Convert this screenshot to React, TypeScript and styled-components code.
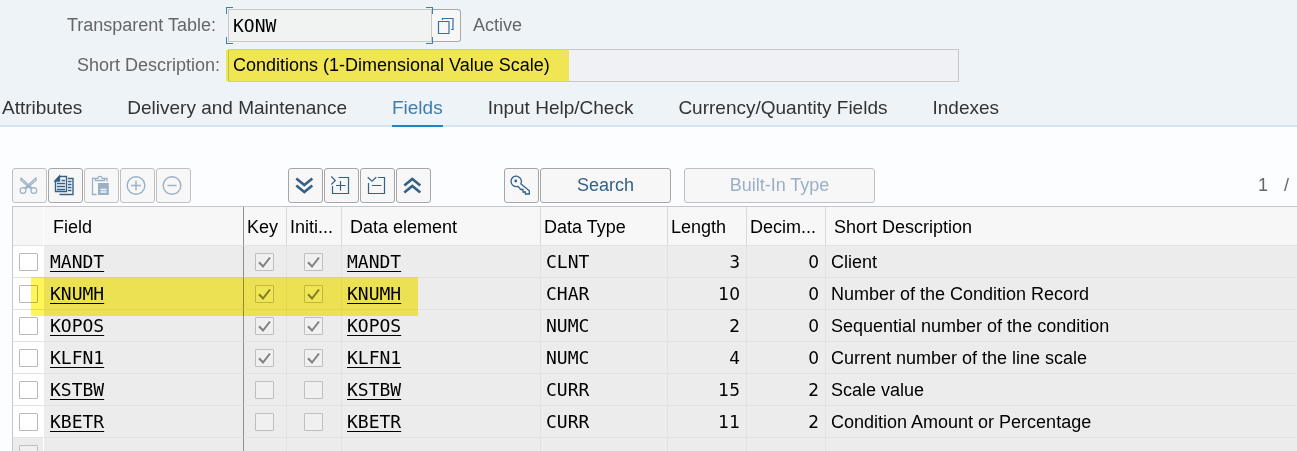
import React from "react";
import styled, { createGlobalStyle } from "styled-components";

const sans = `"Liberation Sans", Arial, sans-serif`;
const mono = `"DejaVu Sans Mono", monospace`;
const marker = "#fff458";

const GlobalStyle = createGlobalStyle`
  *, *::before, *::after { box-sizing: border-box; }
  body { margin: 0; font-family: ${sans}; font-size: 18px; color: #000; }
  button, input { font: inherit; }
`;

const Page = styled.main`
  display: flex;
  flex-direction: column;
  height: 100vh;
  overflow: hidden;
  background: #fcfdff;
`;

const Header = styled.header`
  display: flex;
  flex-direction: column;
  padding-top: 9px;
  background: #eef3f8;
`;

const Form = styled.form`
  display: flex;
  flex-direction: column;
  gap: 7px;
`;

const FormRow = styled.div`
  display: flex;
  align-items: center;
  height: 33px;
`;

const Label = styled.label<{ $inset: number }>`
  width: 228px;
  flex: none;
  padding-right: ${(p) => p.$inset}px;
  text-align: right;
  color: #666;
`;

const InputFrame = styled.div<{ $wide?: boolean }>`
  position: relative;
  flex: 0 1 ${(p) => (p.$wide ? "731px" : "204px")};
  height: 33px;
`;

const TextInput = styled.input<{ $code?: boolean }>`
  display: block;
  width: 100%;
  height: 100%;
  padding: 0 4px;
  border: 1px solid #c8c8c8;
  border-radius: 0;
  outline: none;
  background: ${(p) => (p.$code ? "#f1f2f2" : "#f0f1f4")};
  font-family: ${(p) => (p.$code ? mono : sans)};
  color: #000;
`;

const Corner = styled.span<{ $v: "top" | "bottom"; $h: "left" | "right" }>`
  position: absolute;
  width: 7px;
  height: 7px;
  ${(p) => p.$v}: -2px;
  ${(p) => p.$h}: ${(p) => (p.$h === "left" ? -2 : -1)}px;
  border: 0 solid #3c7fb1;
  border-${(p) => p.$v}-width: 1px;
  border-${(p) => p.$h}-width: 1px;
`;

const InputMark = styled.span`
  position: absolute;
  left: -2px;
  top: 1px;
  width: 343px;
  height: 31px;
  background: ${marker};
  mix-blend-mode: multiply;
  pointer-events: none;
`;

const HelpButton = styled.button`
  display: grid;
  place-items: center;
  width: 29px;
  height: 33px;
  padding: 0;
  border: 1px solid #a9a9a9;
  border-left: 0;
  border-radius: 0 3px 3px 0;
  background: #f7f7f7;
`;

const Status = styled.span`
  margin-left: 12px;
  color: #666;
`;

const Tabs = styled.nav`
  display: flex;
  gap: 45px;
  height: 45px;
  padding-left: 2px;
  border-bottom: 2px solid #d6e4f2;
`;

const Tab = styled.a<{ $active?: boolean }>`
  height: 45px;
  padding-top: 6px;
  border-bottom: 2px solid ${(p) => (p.$active ? "#1b86c0" : "transparent")};
  font-size: 19px;
  line-height: 40px;
  white-space: nowrap;
  text-decoration: none;
  color: ${(p) => (p.$active ? "#427cac" : "#333")};
`;

const Toolbar = styled.div`
  display: flex;
  align-items: center;
  gap: 13px;
  padding: 41px 8px 3px 12px;
`;

const Group = styled.div<{ $before?: number }>`
  display: flex;
  gap: 1px;
  margin-left: ${(p) => p.$before ?? 0}px;
`;

const ToolButton = styled.button<{ $width?: number }>`
  display: grid;
  place-items: center;
  width: ${(p) => p.$width ?? 35}px;
  height: 35px;
  padding: 0;
  border: 1px solid #a6a6a6;
  border-radius: 3px;
  background: #f7f7f7;
  color: #346187;

  &:disabled {
    border-color: #c0c0c0;
    color: #9ab0c6;
  }
`;

const Pager = styled.div`
  display: flex;
  gap: 16px;
  margin-left: auto;
  color: #666;
`;

const Grid = styled.div`
  flex: 1;
  margin-left: 12px;
  border: 1px solid #c4c6c9;
  border-width: 1px 0 0 1px;
`;

const Table = styled.table`
  width: 100%;
  table-layout: fixed;
  border-collapse: separate;
  border-spacing: 0;
`;

const Col = styled.col<{ $width?: number }>`
  width: ${(p) => (p.$width ? `${p.$width}px` : "auto")};
`;

const HeadCell = styled.th<{ $pad?: number; $line?: string }>`
  height: 39px;
  padding: 2px 0 0 ${(p) => p.$pad ?? 3}px;
  border-right: 1px solid ${(p) => p.$line ?? "#dadada"};
  border-bottom: 1px solid #e2e2e2;
  background: #f7f7f7;
  font-weight: normal;
  text-align: left;
  white-space: nowrap;

  &:last-child { border-right: 0; }
`;

type CellKind = "select" | "code" | "check" | "number" | "text";

const Cell = styled.td<{ $kind: CellKind; $pad?: number; $line?: string; $empty?: boolean }>`
  height: 32px;
  padding: 0 6px 0 ${(p) => p.$pad ?? 5}px;
  border-right: 1px solid ${(p) => p.$line ?? "#e2e2e2"};
  border-bottom: 1px solid #e2e2e2;
  background: ${(p) => (p.$kind === "select" && !p.$empty ? "#fff" : "#ececec")};
  font-family: ${(p) => (p.$kind === "code" ? mono : p.$kind === "number" ? `"DejaVu Sans", sans-serif` : sans)};
  font-size: ${(p) => (p.$kind === "number" ? 17 : 18)}px;
  line-height: 24px;
  text-align: ${(p) => (p.$kind === "number" ? "right" : "left")};
  white-space: nowrap;

  &:last-child { border-right: 0; }
`;

const SelectCell = styled(Cell)`
  position: relative;
  padding: 1px 0 0 6px;
`;

const CheckCell = styled(Cell)`
  padding: 1px 0 0 ${(p) => p.$pad ?? 0}px;
`;

const RowMark = styled.span`
  position: absolute;
  z-index: 1;
  left: 18px;
  top: -1px;
  width: 387px;
  height: 39px;
  background: ${marker};
  mix-blend-mode: multiply;
  pointer-events: none;
`;

const CellLink = styled.a`
  color: #000;
  text-decoration: underline;
  text-decoration-thickness: 1px;
  text-underline-offset: 3px;
`;

const CheckFrame = styled.span`
  display: grid;
  width: 19px;
  height: 18px;

  > * { grid-area: 1 / 1; }
`;

const CheckInput = styled.input`
  appearance: none;
  width: 19px;
  height: 18px;
  margin: 0;
  border: 1px solid #b9b9bb;
  border-radius: 1px;
  background: #fff;

  &:disabled { background: #f0f0f0; border-color: #bfbfc1; }
`;

function CheckBox({ label, checked, disabled }: { label: string; checked?: boolean; disabled?: boolean }) {
  return (
    <CheckFrame>
      <CheckInput type="checkbox" aria-label={label} defaultChecked={checked} disabled={disabled} />
      {checked && (
        <svg width="19" height="18" viewBox="0 0 19 18" fill="none" stroke="#7f7f7f" strokeWidth="2" pointerEvents="none">
          <path d="M4 9.200 8 13.500 15 4.500" />
        </svg>
      )}
    </CheckFrame>
  );
}

function Icon({ children, width = 1.2 }: { children: React.ReactNode; width?: number }) {
  return (
    <svg width="33" height="33" viewBox="0 0 33 33" fill="none" stroke="currentColor" strokeWidth={width} aria-hidden="true">
      {children}
    </svg>
  );
}

const CutIcon = () => (
  <Icon>
    <path d="M7.800 8.800v2.500l10 8.500M7.800 8.800l11.500 10.500M23.200 8.800v2.500l-10 8.500M23.200 8.800l-11.500 10.500" />
    <circle cx="10" cy="21.500" r="2.900" />
    <circle cx="20.800" cy="21.500" r="2.900" />
  </Icon>
);

const CopyIcon = () => (
  <Icon width={1.4}>
    <path d="M10.500 7.500H17.500V22.500H6.500V11.500z" />
    <path d="M10.500 7v5H6z" fill="currentColor" />
    <path d="M8 14.500h8M8 17.500h8M8 20.500h8M12.500 11.500h3.500M19 9.500h5V25.500H10.500M19 12.500h3.500M19 15.500h3.500M19 18.500h3.500M19 21.500h3.500" />
  </Icon>
);

const PasteIcon = () => (
  <Icon width={1.3}>
    <path d="M11.500 25.500H7.500V9.500H10M20 9.500H22V12.500M10.500 11.500h9V9.300h-2.300c-.5-2.600-3.900-2.600-4.400 0h-2.300z" />
    <path d="M13 14h10.800v12H13z" fill="currentColor" stroke="none" />
    <path d="M15.500 20.500h6M15.500 23h6" stroke="#f7f7f7" />
  </Icon>
);

const AddIcon = () => (
  <Icon width={1.4}>
    <circle cx="15" cy="16.500" r="8.800" />
    <path d="M15 11.500v10M10 16.500h10" />
  </Icon>
);

const RemoveIcon = () => (
  <Icon width={1.4}>
    <circle cx="15" cy="16.500" r="8.800" />
    <path d="M10.500 16.500h9" />
  </Icon>
);

const DownIcon = () => (
  <Icon width={2.6}>
    <path d="M7.300 9.500l8 6.500 8-6.500M7.300 16.500l8 6.500 8-6.500" />
  </Icon>
);

const UpIcon = () => (
  <Icon width={2.6}>
    <path d="M7.300 16.500l8-6.500 8 6.500M7.300 23.500l8-6.500 8 6.500" />
  </Icon>
);

const ExpandIcon = () => (
  <Icon>
    <path d="M6.300 7.500l4 4-4 4M13.500 8.500h10v16h-16v-7.500M11 16.500h9.500M15.500 12v9.500" />
  </Icon>
);

const CollapseIcon = () => (
  <Icon>
    <path d="M6.700 8.300l4.300 4 4.300-4M17 8.500h6.500v16h-16v-10.500M11 16.500h9.500" />
  </Icon>
);

const KeyIcon = () => (
  <Icon width={1.3}>
    <path d="M15.800 14.800l8.500 7v3.200h-4v-2h-2.300v-2.500h-2.200l-3-3.200a5.200 5.200 0 1 1 3-2.500z" />
    <circle cx="10.800" cy="12" r="1.400" fill="currentColor" stroke="none" />
  </Icon>
);

const tabs = [
  "Attributes",
  "Delivery and Maintenance",
  "Fields",
  "Input Help/Check",
  "Currency/Quantity Fields",
  "Indexes",
];

const rows = [
  { field: "MANDT", key: true, type: "CLNT", length: 3, decimals: 0, text: "Client" },
  { field: "KNUMH", key: true, type: "CHAR", length: 10, decimals: 0, text: "Number of the Condition Record", marked: true },
  { field: "KOPOS", key: true, type: "NUMC", length: 2, decimals: 0, text: "Sequential number of the condition" },
  { field: "KLFN1", key: true, type: "NUMC", length: 4, decimals: 0, text: "Current number of the line scale" },
  { field: "KSTBW", key: false, type: "CURR", length: 15, decimals: 2, text: "Scale value" },
  { field: "KBETR", key: false, type: "CURR", length: 11, decimals: 2, text: "Condition Amount or Percentage" },
];

const columnWidths = [31, 200, 43, 55, 199, 127, 79, 79, undefined];
const fixedLine = "#8f8f8f";

export default function App() {
  return (
    <Page>
      <GlobalStyle />
      <Header>
        <Form>
          <FormRow>
            <Label htmlFor="table-name" $inset={12}>Transparent Table:</Label>
            <InputFrame>
              <TextInput id="table-name" $code readOnly value="KONW" />
              <Corner $v="top" $h="left" />
              <Corner $v="top" $h="right" />
              <Corner $v="bottom" $h="left" />
              <Corner $v="bottom" $h="right" />
            </InputFrame>
            <HelpButton type="button" aria-label="Value help">
              <svg width="18" height="18" viewBox="0 0 18 18" fill="none" stroke="#346fa5" strokeWidth="1.2">
                <path d="M1.500 4.500h10.500v12H1.500zM5.500 3V1.500H16V12.500H14" />
              </svg>
            </HelpButton>
            <Status>Active</Status>
          </FormRow>
          <FormRow>
            <Label htmlFor="description" $inset={8}>Short Description:</Label>
            <InputFrame $wide>
              <TextInput id="description" readOnly value="Conditions (1-Dimensional Value Scale)" />
              <InputMark />
            </InputFrame>
          </FormRow>
        </Form>
        <Tabs>
          {tabs.map((name) => (
            <Tab key={name} href="#" $active={name === "Fields"}>{name}</Tab>
          ))}
        </Tabs>
      </Header>

      <Toolbar>
        <Group>
          <ToolButton disabled aria-label="Cut"><CutIcon /></ToolButton>
          <ToolButton aria-label="Copy"><CopyIcon /></ToolButton>
          <ToolButton disabled aria-label="Paste"><PasteIcon /></ToolButton>
          <ToolButton disabled aria-label="Insert row"><AddIcon /></ToolButton>
          <ToolButton disabled aria-label="Delete row"><RemoveIcon /></ToolButton>
        </Group>
        <Group $before={84}>
          <ToolButton aria-label="Expand all"><DownIcon /></ToolButton>
          <ToolButton aria-label="Expand"><ExpandIcon /></ToolButton>
          <ToolButton aria-label="Collapse"><CollapseIcon /></ToolButton>
          <ToolButton aria-label="Collapse all"><UpIcon /></ToolButton>
        </Group>
        <Group $before={60}>
          <ToolButton aria-label="Foreign keys"><KeyIcon /></ToolButton>
          <ToolButton $width={131}>Search</ToolButton>
        </Group>
        <ToolButton $width={191} disabled>Built-In Type</ToolButton>
        <Pager><span>1</span><span>/</span></Pager>
      </Toolbar>

      <Grid>
        <Table>
          <colgroup>
            {columnWidths.map((width, i) => <Col key={i} $width={width} />)}
          </colgroup>
          <thead>
            <tr>
              <HeadCell $line="#fff" aria-label="Select" />
              <HeadCell $pad={9} $line={fixedLine}>Field</HeadCell>
              <HeadCell>Key</HeadCell>
              <HeadCell>Initi...</HeadCell>
              <HeadCell $pad={8}>Data element</HeadCell>
              <HeadCell>Data Type</HeadCell>
              <HeadCell>Length</HeadCell>
              <HeadCell>Decim...</HeadCell>
              <HeadCell $pad={8}>Short Description</HeadCell>
            </tr>
          </thead>
          <tbody>
            {rows.map((row) => (
              <tr key={row.field}>
                <SelectCell $kind="select" $line="#fff">
                  <CheckBox label={`Select ${row.field}`} />
                  {row.marked && <RowMark />}
                </SelectCell>
                <Cell $kind="code" $pad={6} $line={fixedLine}><CellLink href="#">{row.field}</CellLink></Cell>
                <CheckCell $kind="check" $pad={11}><CheckBox label="Key" checked={row.key} disabled /></CheckCell>
                <CheckCell $kind="check" $pad={17}><CheckBox label="Initial value" checked={row.key} disabled /></CheckCell>
                <Cell $kind="code"><CellLink href="#">{row.field}</CellLink></Cell>
                <Cell $kind="code">{row.type}</Cell>
                <Cell $kind="number">{row.length}</Cell>
                <Cell $kind="number">{row.decimals}</Cell>
                <Cell $kind="text">{row.text}</Cell>
              </tr>
            ))}
            <tr>
              <SelectCell $kind="select" $line="#fff" $empty><CheckBox label="Select empty row" disabled /></SelectCell>
              <Cell $kind="code" $line={fixedLine} />
              {columnWidths.slice(2).map((_, i) => <Cell key={i} $kind="text" />)}
            </tr>
          </tbody>
        </Table>
      </Grid>
    </Page>
  );
}
